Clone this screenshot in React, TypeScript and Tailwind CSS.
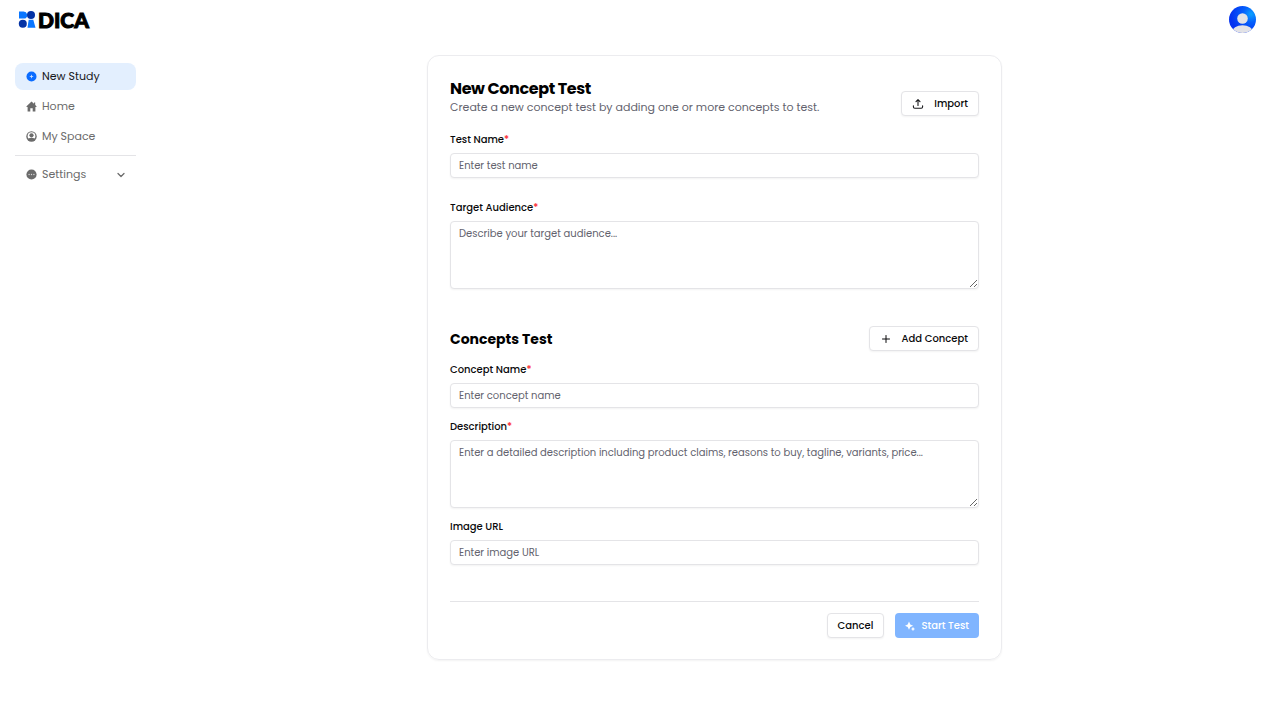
import { useState } from 'react'
import type { ReactNode } from 'react'
import { ChevronDown, Plus } from 'lucide-react'

const fieldClass =
  'block w-full rounded-[4px] border border-[#e4e4e7] bg-white px-2 text-[10px] leading-4 text-black shadow-xs outline-none placeholder:text-[#63636e] focus:border-blue-400'

const outlineButton =
  'flex h-[25px] shrink-0 items-center rounded-[4px] border border-[#e4e4e7] bg-white px-[10px] text-[10px] font-medium text-[#09090b] shadow-xs hover:bg-gray-50'

function Logo() {
  return (
    <a href="#" aria-label="DICA" className="flex items-center gap-[2px]">
      <svg width="18" height="17" viewBox="0 0 18 17" aria-hidden="true">
        <path d="M1 .5h4.6a3.7 3.7 0 0 1 1.8 6.9H1z" fill="#0a76ff" />
        <circle cx="13" cy="4.1" r="4" fill="#0433a5" />
        <circle cx="4.8" cy="12.8" r="4" fill="#0433a5" />
        <path d="M10.7 8.8h4.6l2.2 8h-8z" fill="#0a76ff" />
      </svg>
      <span className="font-[Lato,sans-serif] text-[21px] leading-5 font-black text-black [-webkit-text-stroke:1px_black]">
        DICA
      </span>
    </a>
  )
}

function Avatar() {
  return (
    <button type="button" aria-label="Account" className="size-[27px] overflow-hidden rounded-full">
      <svg viewBox="0 0 27 27" className="size-full" aria-hidden="true">
        <defs>
          <radialGradient id="avatarFill" cx="0.82" cy="0.3" r="0.75">
            <stop offset="0" stopColor="#0ba2ff" />
            <stop offset="0.4" stopColor="#0560fc" />
            <stop offset="1" stopColor="#0432f0" />
          </radialGradient>
        </defs>
        <rect width="27" height="27" fill="url(#avatarFill)" />
        <circle cx="13.5" cy="12.5" r="5.3" fill="#e2e2e6" />
        <ellipse cx="13.5" cy="26" rx="10.5" ry="6.7" fill="#e2e2e6" />
      </svg>
    </button>
  )
}

function NewStudyIcon() {
  return (
    <svg width="11" height="11" viewBox="0 0 11 11" aria-hidden="true">
      <circle cx="5.5" cy="5.5" r="5" fill="#0a6cff" />
      <path d="M5.5 3.8v3.4M3.8 5.5h3.4" stroke="#d5e6ff" strokeWidth="0.8" />
    </svg>
  )
}

function HomeIcon() {
  return (
    <svg width="11" height="11" viewBox="0 0 11 11" aria-hidden="true">
      <path
        d="M5.5.5 8 2.8V1.4h1.2v2.5l1.5 1.5-.5.6h-.8v4.5H6.7V7.2H4.3v3.3H1.6V6H.8l-.5-.6z"
        fill="#6b6b6b"
      />
    </svg>
  )
}

function SpaceIcon() {
  return (
    <svg width="11" height="11" viewBox="0 0 11 11" aria-hidden="true">
      <circle cx="5.5" cy="5.5" r="5.2" fill="#6b6b6b" />
      <path d="M1.6 5.2a3.9 3.9 0 0 1 7.8 0c0 .9-.3 1.7-.8 2.3-1.8-1-4.4-1-6.2 0-.5-.6-.8-1.4-.8-2.3z" fill="#fff" />
      <circle cx="5.5" cy="4.3" r="2.1" fill="#6b6b6b" />
    </svg>
  )
}

function SettingsIcon() {
  return (
    <svg width="11" height="11" viewBox="0 0 11 11" aria-hidden="true">
      <circle cx="5.5" cy="5.5" r="5.1" fill="#6b6b6b" />
      <circle cx="3.1" cy="5.5" r="0.7" fill="#d4d4d4" />
      <circle cx="5.5" cy="5.5" r="0.7" fill="#d4d4d4" />
      <circle cx="7.9" cy="5.5" r="0.7" fill="#d4d4d4" />
    </svg>
  )
}

function ImportIcon() {
  return (
    <svg
      width="12"
      height="12"
      viewBox="0 0 12 12"
      fill="none"
      stroke="#18181b"
      strokeWidth="1.1"
      strokeLinecap="round"
      strokeLinejoin="round"
      aria-hidden="true"
    >
      <path d="M6 7.5V2M4 3.7l2-2 2 2M1.4 7.8v1c0 .9.5 1.4 1.4 1.4h6.4c.9 0 1.4-.5 1.4-1.4v-1" />
    </svg>
  )
}

function SparkleIcon() {
  return (
    <svg width="10" height="10" viewBox="0 0 10 10" fill="#fff" aria-hidden="true">
      <path d="M4 .6 5.3 3.4 8.1 4.7 5.3 6 4 8.8 2.7 6 0 4.7l2.7-1.3z" />
      <path d="m8 5.8.7 1.5 1.3.7-1.3.7L8 10.2l-.7-1.5L6 8l1.3-.7z" />
    </svg>
  )
}

function NavLink({ icon, label, active }: { icon: ReactNode; label: string; active?: boolean }) {
  return (
    <a
      href="#"
      aria-current={active ? 'page' : undefined}
      className={
        active
          ? 'flex h-[27px] items-center gap-[5px] rounded-lg bg-[#e3effe] px-[11px] text-[#18181b]'
          : 'flex h-[27px] items-center gap-[5px] rounded-lg px-[11px] hover:bg-gray-50'
      }
    >
      {icon}
      {label}
    </a>
  )
}

function Field({
  id,
  label,
  required,
  children,
}: {
  id: string
  label: string
  required?: boolean
  children: ReactNode
}) {
  return (
    <div>
      <label htmlFor={id} className="mb-[5px] block text-[10px] leading-4 font-medium text-[#09090b]">
        {label}
        {required && <span className="text-red-500">*</span>}
      </label>
      {children}
    </div>
  )
}

export default function App() {
  const [testName, setTestName] = useState('')
  const [audience, setAudience] = useState('')

  return (
    <div className="min-h-screen bg-white font-[Poppins,Inter,sans-serif]">
      <header className="flex h-[39px] items-center justify-between pr-6 pl-[18px]">
        <Logo />
        <Avatar />
      </header>

      <div className="flex">
        <aside className="w-[149px] shrink-0 pt-6 pr-[13px] pl-[15px] text-[11px] text-[#6b6b6b]">
          <nav className="flex flex-col gap-[3px]">
            <NavLink icon={<NewStudyIcon />} label="New Study" active />
            <NavLink icon={<HomeIcon />} label="Home" />
            <NavLink icon={<SpaceIcon />} label="My Space" />
          </nav>
          <div className="mt-[5px] border-t border-[#e4e4e7] pt-[5px]">
            <button type="button" className="flex h-[27px] w-full items-center gap-[5px] pr-[9px] pl-[11px]">
              <SettingsIcon />
              Settings
              <ChevronDown className="ml-auto size-3" strokeWidth={2.5} />
            </button>
          </div>
        </aside>

        <main className="min-w-0 flex-1 px-4 pt-4 pb-10">
          <form
            onSubmit={(e) => e.preventDefault()}
            className="mx-auto max-w-[575px] rounded-xl border border-[#ececef] px-[22px] pt-6 pb-[21px] shadow-xs"
          >
            <div className="flex items-end justify-between gap-4">
              <div>
                <h1 className="text-[16px] leading-[18px] font-bold tracking-tight text-black">New Concept Test</h1>
                <p className="text-[11px] leading-[18px] text-[#63636e]">
                  Create a new concept test by adding one or more concepts to test.
                </p>
              </div>
              <button type="button" className={outlineButton}>
                <span className="mr-[10px]">
                  <ImportIcon />
                </span>
                Import
              </button>
            </div>

            <div className="mt-4 flex flex-col gap-[22px]">
              <Field id="test-name" label="Test Name" required>
                <input
                  id="test-name"
                  type="text"
                  value={testName}
                  onChange={(e) => setTestName(e.target.value)}
                  placeholder="Enter test name"
                  className={`${fieldClass} h-[25px]`}
                />
              </Field>
              <Field id="audience" label="Target Audience" required>
                <textarea
                  id="audience"
                  value={audience}
                  onChange={(e) => setAudience(e.target.value)}
                  placeholder="Describe your target audience..."
                  className={`${fieldClass} h-[68px] resize-y py-1`}
                />
              </Field>
            </div>

            <div className="mt-[37px] flex items-center justify-between gap-4">
              <h2 className="text-[14px] leading-5 font-bold text-black">Concepts Test</h2>
              <button type="button" className={outlineButton}>
                <Plus className="mr-[10px] size-3" strokeWidth={2} />
                Add Concept
              </button>
            </div>

            <div className="mt-[11px] flex flex-col gap-[11px]">
              <Field id="concept-name" label="Concept Name" required>
                <input
                  id="concept-name"
                  type="text"
                  placeholder="Enter concept name"
                  className={`${fieldClass} h-[25px]`}
                />
              </Field>
              <Field id="description" label="Description" required>
                <textarea
                  id="description"
                  placeholder="Enter a detailed description including product claims, reasons to buy, tagline, variants, price..."
                  className={`${fieldClass} h-[68px] resize-y py-1`}
                />
              </Field>
              <Field id="image-url" label="Image URL">
                <input
                  id="image-url"
                  type="url"
                  placeholder="Enter image URL"
                  className={`${fieldClass} h-[25px]`}
                />
              </Field>
            </div>

            <div className="mt-9 flex justify-end gap-[11px] border-t border-[#e4e4e7] pt-[11px]">
              <button type="button" className={outlineButton}>
                Cancel
              </button>
              <button
                type="submit"
                className="flex h-[25px] items-center gap-[6px] rounded-[4px] bg-[#80b5ff] px-[10px] text-[10px] font-medium text-white"
              >
                <SparkleIcon />
                Start Test
              </button>
            </div>
          </form>
        </main>
      </div>
    </div>
  )
}
